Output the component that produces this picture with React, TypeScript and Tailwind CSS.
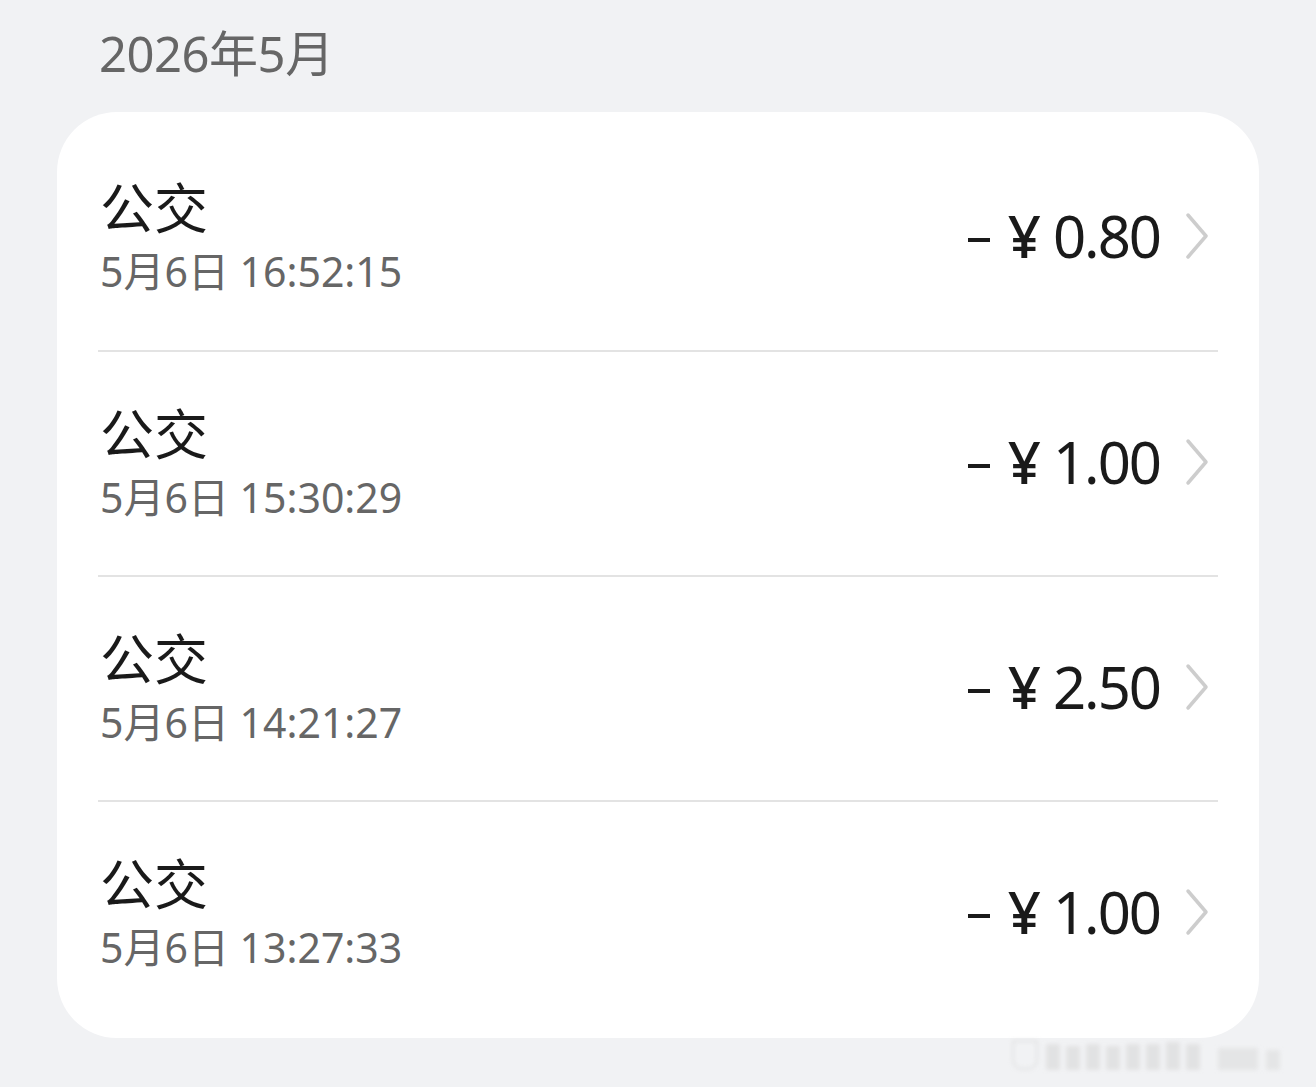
import React from "react";

const rows = [
  { time: "5月6日 16:52:15", amount: "0.80" },
  { time: "5月6日 15:30:29", amount: "1.00" },
  { time: "5月6日 14:21:27", amount: "2.50" },
  { time: "5月6日 13:27:33", amount: "1.00" },
];

const font = { fontFamily: '"Noto Sans", "Noto Sans CJK SC", sans-serif' };

function Chevron() {
  return (
    <svg width="26" height="48" viewBox="0 0 26 48" className="shrink-0">
      <path d="M4 3 L22 24 L4 45" fill="none" stroke="#cdcdcd" strokeWidth="3.5" strokeLinecap="round" strokeLinejoin="round" />
    </svg>
  );
}

export default function App() {
  return (
    <div className="relative w-[1316px] h-[1087px] bg-[#f1f2f4] overflow-hidden" style={font}>
      <div className="px-[57px]">
        <div className="h-[112px] flex items-center pl-[42px] pb-[6px]">
          <span className="text-[49px] text-[#666666] leading-none tracking-[-0.5px]">2026年5月</span>
        </div>
        <div className="bg-white rounded-[60px] px-[41px] py-[13px]">
          {rows.map((r, i) => (
            <div key={i} className={`h-[225px] flex items-center ${i > 0 ? "border-t-2 border-[#e3e3e3]" : ""}`}>
              <div className="flex-1 flex flex-col pl-[2px] pb-[4px]">
                <span className="text-[54px] leading-[58px] text-[#1a1a1a] font-normal" style={{ fontFamily: '"Noto Sans CJK SC", sans-serif' }}>公交</span>
                <span className="text-[41px] leading-[48px] text-[#666666] mt-[12px]">{r.time}</span>
              </div>
              <div className="flex items-center pr-[8px] pb-[4px]">
                <span className="text-[58px] leading-none text-[#1a1a1a]">
                  <span className="inline-block w-[22px] h-[4px] bg-[#1a1a1a] align-middle mr-[18px] mb-[4px]"></span>
                  <span className="mr-[12px] font-medium">¥</span>
                  <span className="tracking-[-2px]">{r.amount}</span>
                </span>
                <div className="ml-[24px]">
                  <Chevron />
                </div>
              </div>
            </div>
          ))}
        </div>
      </div>
      <div className="absolute left-[1012px] top-[1040px] flex items-end gap-[8px] blur-[2px] opacity-60">
        <div className="w-[26px] h-[30px] rounded-b-[10px] border-2 border-[#d8d8d8]"></div>
        <div className="flex gap-[6px] items-end">
          {[26, 24, 26, 24, 26, 26, 28, 26].map((h, i) => (
            <div key={i} className="w-[14px] bg-[#d8d8d8]" style={{ height: h }}></div>
          ))}
        </div>
        <div className="w-[40px] h-[22px] bg-[#dddddd] ml-[10px]"></div>
        <div className="w-[14px] h-[20px] bg-[#dddddd]"></div>
      </div>
    </div>
  );
}
